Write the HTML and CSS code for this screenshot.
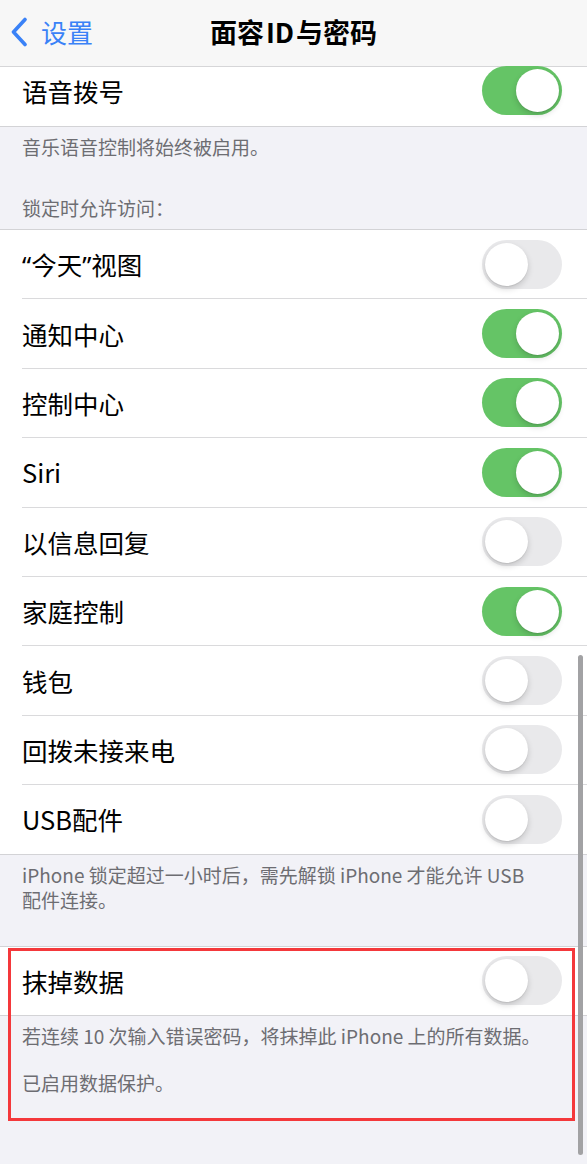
FILE: index.html
```html
<!DOCTYPE html>
<html lang="zh-CN">
<head>
<meta charset="utf-8">
<title>面容ID与密码</title>
<link rel="stylesheet" href="styles.css">
</head>
<body>
<div class="screen">
  <header class="nav">
    <div class="back">
      <svg class="chev" width="18" height="30" viewBox="0 0 18 30"><path d="M15 2.5 L3.5 15 L15 27.5" fill="none" stroke="#3a82f7" stroke-width="3.6" stroke-linecap="round" stroke-linejoin="round"/></svg>
      <span class="back-text">设置</span>
    </div>
    <div class="title">面容<span class="lat">ID</span>与密码</div>
    <div></div>
  </header>

  <section class="group first">
    <div class="row"><div class="row-inner cut"><span class="label">语音拨号</span><span class="toggle on"><span class="knob"></span></span></div></div>
  </section>
  <div class="footer f1"><p>音乐语音控制将始终被启用。</p></div>
  <div class="header">锁定时允许访问：</div>

  <section class="group">
    <div class="row"><div class="row-inner"><span class="label"><span class="q">“</span>今天<span class="q">”</span>视图</span><span class="toggle"><span class="knob"></span></span></div></div>
    <div class="row"><div class="row-inner"><span class="label">通知中心</span><span class="toggle on"><span class="knob"></span></span></div></div>
    <div class="row"><div class="row-inner"><span class="label">控制中心</span><span class="toggle on"><span class="knob"></span></span></div></div>
    <div class="row"><div class="row-inner"><span class="label">Siri</span><span class="toggle on"><span class="knob"></span></span></div></div>
    <div class="row"><div class="row-inner"><span class="label">以信息回复</span><span class="toggle"><span class="knob"></span></span></div></div>
    <div class="row"><div class="row-inner"><span class="label">家庭控制</span><span class="toggle on"><span class="knob"></span></span></div></div>
    <div class="row"><div class="row-inner"><span class="label">钱包</span><span class="toggle"><span class="knob"></span></span></div></div>
    <div class="row"><div class="row-inner"><span class="label">回拨未接来电</span><span class="toggle"><span class="knob"></span></span></div></div>
    <div class="row"><div class="row-inner"><span class="label">USB配件</span><span class="toggle"><span class="knob"></span></span></div></div>
  </section>
  <div class="footer f2"><p>iPhone 锁定超过一小时后，需先解锁 iPhone 才能允许 USB<br>配件连接。</p></div>

  <section class="group g3">
    <div class="row"><div class="row-inner short"><span class="label">抹掉数据</span><span class="toggle"><span class="knob"></span></span></div></div>
  </section>
  <div class="footer f3">
    <p>若连续 10 次输入错误密码，将抹掉此 iPhone 上的所有数据。</p>
    <p class="p2">已启用数据保护。</p>
  </div>

  <div class="highlight"></div>
  <div class="scrollbar"></div>
</div>
</body>
</html>
```

FILE: styles.css
```css
* { box-sizing: border-box; }
html, body { margin: 0; padding: 0; }
body {
  background: #f2f2f7;
  font-family: "Noto Sans CJK SC", "Noto Sans", sans-serif;
  color: #000;
}
.screen {
  position: relative;
  width: 587px;
  height: 1164px;
  overflow: hidden;
  background: #f2f2f7;
}
.nav {
  height: 67px;
  background: #f7f7f7;
  border-bottom: 1px solid #d6d6d8;
  display: grid;
  grid-template-columns: 1fr auto 1fr;
  align-items: center;
  padding-bottom: 2px;
}
.back {
  display: flex;
  align-items: center;
  padding-left: 10px;
}
.chev { display: block; }
.back-text {
  margin-left: 13px;
  color: #3a82f7;
  font-size: 26px;
  line-height: 30px;
}
.title {
  font-size: 27px;
  font-weight: 600;
  line-height: 30px;
}
.title .lat { margin: 0 2px; }
.group {
  background: #fff;
  border-top: 1px solid #d3d3d6;
  border-bottom: 1px solid #d3d3d6;
}
.group.first { border-top: none; }
.row { padding-left: 22px; }
.row-inner {
  height: 69.4px;
  display: flex;
  align-items: center;
  justify-content: space-between;
  padding-right: 25px;
  border-bottom: 1px solid #dadadc;
}
.row:last-child .row-inner { border-bottom: none; height: 68.4px; }
.row-inner.cut { height: 59px; padding-bottom: 12px; }
.row:last-child .row-inner.cut { height: 59px; }
.row:last-child .row-inner.short { height: 68px; }
.label {
  font-size: 25.5px;
  line-height: 30px;
}
.label .q { font-family: "Noto Sans", "Liberation Sans", sans-serif; }
.toggle {
  width: 80px;
  height: 49px;
  border-radius: 25px;
  background: #e9e9eb;
  display: flex;
  align-items: center;
  padding: 0 3px;
  flex: none;
}
.toggle.on {
  background: #65c466;
  justify-content: flex-end;
}
.knob {
  width: 43px;
  height: 43px;
  border-radius: 50%;
  background: #fff;
  box-shadow: 0 3px 6px rgba(0,0,0,0.16), 0 1px 1px rgba(0,0,0,0.08);
}
.footer {
  padding: 7px 10px 0 22px;
  color: #6d6d72;
  font-size: 19px;
  line-height: 25px;
}
.footer p { margin: 0; }
.header {
  margin-top: 37px;
  padding: 0 22px 9px;
  color: #6d6d72;
  font-size: 19px;
  line-height: 24px;
}
.f2 { padding-top: 7px; }
.g3 { margin-top: 34px; }
.f3 { padding-top: 7px; }
.f3 .p2 { margin-top: 22px; }
.highlight {
  position: absolute;
  left: 8px;
  top: 948px;
  width: 567px;
  height: 173px;
  border: 3px solid #f4383b;
}
.scrollbar {
  position: absolute;
  left: 578px;
  top: 655px;
  width: 5px;
  height: 500px;
  border-radius: 3px;
  background: #a2a2a4;
}
```
